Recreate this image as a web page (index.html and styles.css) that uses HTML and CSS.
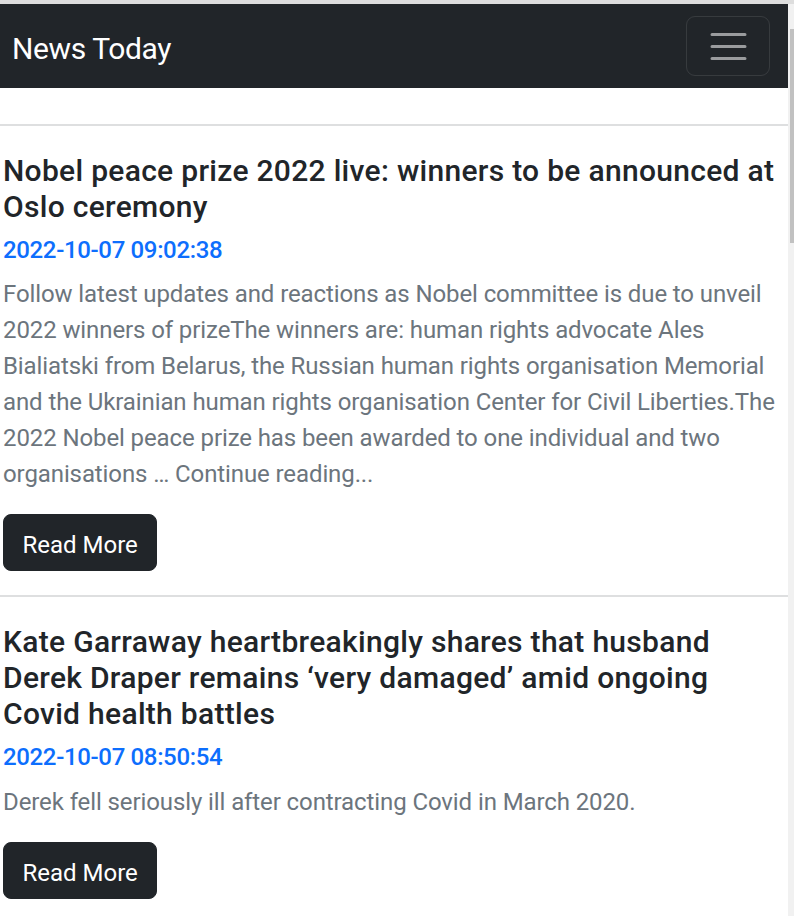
FILE: index.html
```html
<!DOCTYPE html>
<html lang="en">
<head>
<meta charset="utf-8">
<title>News Today</title>
<link rel="stylesheet" href="styles.css">
</head>
<body>
<div class="window-top"></div>
<div class="viewport">
  <div class="page">
    <nav class="navbar">
      <a class="brand" href="#">News Today</a>
      <button class="toggler" type="button" aria-label="Toggle navigation">
        <svg class="toggler-icon" viewBox="0 0 30 30" width="45" height="45" aria-hidden="true">
          <path d="M4 7h22M4 15h22M4 23h22" stroke="rgba(255,255,255,0.55)" stroke-width="2" stroke-linecap="round" fill="none"/>
        </svg>
      </button>
    </nav>
    <main class="feed">
      <article class="story">
        <hr class="divider">
        <div class="story-body">
          <h5 class="story-title">Nobel peace prize 2022 live: winners to be announced at Oslo ceremony</h5>
          <h6 class="story-date">2022-10-07 09:02:38</h6>
          <p class="story-text">Follow latest updates and reactions as Nobel committee is due to unveil 2022 winners of prizeThe winners are: human rights advocate Ales Bialiatski from Belarus, the Russian human rights organisation Memorial and the Ukrainian human rights organisation Center for Civil Liberties.The 2022 Nobel peace prize has been awarded to one individual and two organisations … Continue reading...</p>
          <a class="btn-dark" href="#">Read More</a>
        </div>
      </article>
      <article class="story">
        <hr class="divider">
        <div class="story-body">
          <h5 class="story-title">Kate Garraway heartbreakingly shares that husband Derek Draper remains ‘very damaged’ amid ongoing Covid health battles</h5>
          <h6 class="story-date">2022-10-07 08:50:54</h6>
          <p class="story-text">Derek fell seriously ill after contracting Covid in March 2020.</p>
          <a class="btn-dark" href="#">Read More</a>
        </div>
      </article>
    </main>
  </div>
  <div class="scrollbar"><div class="scroll-thumb"></div></div>
</div>
</body>
</html>
```
FILE: styles.css
```css
html, body {
  margin: 0;
  padding: 0;
  height: 916px;
  overflow: hidden;
  background: #fff;
}
body {
  font-family: Roboto, "Liberation Sans", sans-serif;
  color: #212529;
}
.window-top {
  height: 4px;
  background: #dddddd;
}
.viewport {
  display: grid;
  grid-template-columns: 788px 6px;
  height: 912px;
}
.page {
  min-width: 0;
}
.scrollbar {
  background: #f1f1f1;
  display: flex;
  justify-content: flex-end;
  padding-top: 25px;
  align-items: flex-start;
}
.scroll-thumb {
  width: 4px;
  height: 214px;
  background: #c1c1c1;
}

/* navbar */
.navbar {
  background: #212529;
  height: 84px;
  box-sizing: border-box;
  padding: 12px 18px 12px 12px;
  display: flex;
  align-items: center;
  justify-content: space-between;
}
.brand {
  color: #fff;
  text-decoration: none;
  font-size: 30px;
  letter-spacing: -0.4px;
  line-height: 45px;
  padding-top: 5px;
}
.toggler {
  width: 84px;
  height: 60px;
  box-sizing: border-box;
  background: transparent;
  border: 1.5px solid rgba(255,255,255,0.1);
  border-radius: 9px;
  padding: 6px 18px;
  display: flex;
  align-items: center;
  justify-content: center;
}
.toggler-icon {
  display: block;
  width: 45px;
  height: 45px;
}

/* feed */
.feed {
  padding-top: 12px;
}
.divider {
  margin: 24px 0;
  border: 0;
  border-top: 2px solid #dedfe0;
  height: 0;
}
.story-body {
  padding: 0 3px;
}
.story-title {
  margin: 0 0 11px;
  padding-top: 3px;
  font-size: 30px;
  font-weight: 500;
  line-height: 36px;
  letter-spacing: 0.3px;
  color: #212529;
}
.story-date {
  margin: 0 0 11.5px;
  font-size: 24px;
  font-weight: 500;
  line-height: 28.8px;
  letter-spacing: -0.35px;
  color: #0d6efd;
}
.story-text {
  margin: 0 0 22px;
  font-size: 24px;
  line-height: 36px;
  letter-spacing: -0.1px;
  color: #6c757d;
}
.btn-dark {
  display: inline-block;
  background: #212529;
  color: #fff;
  text-decoration: none;
  font-size: 24px;
  line-height: 36px;
  padding: 12px 18.5px 7px;
  border: 1px solid #212529;
  border-radius: 8px;
}
```
